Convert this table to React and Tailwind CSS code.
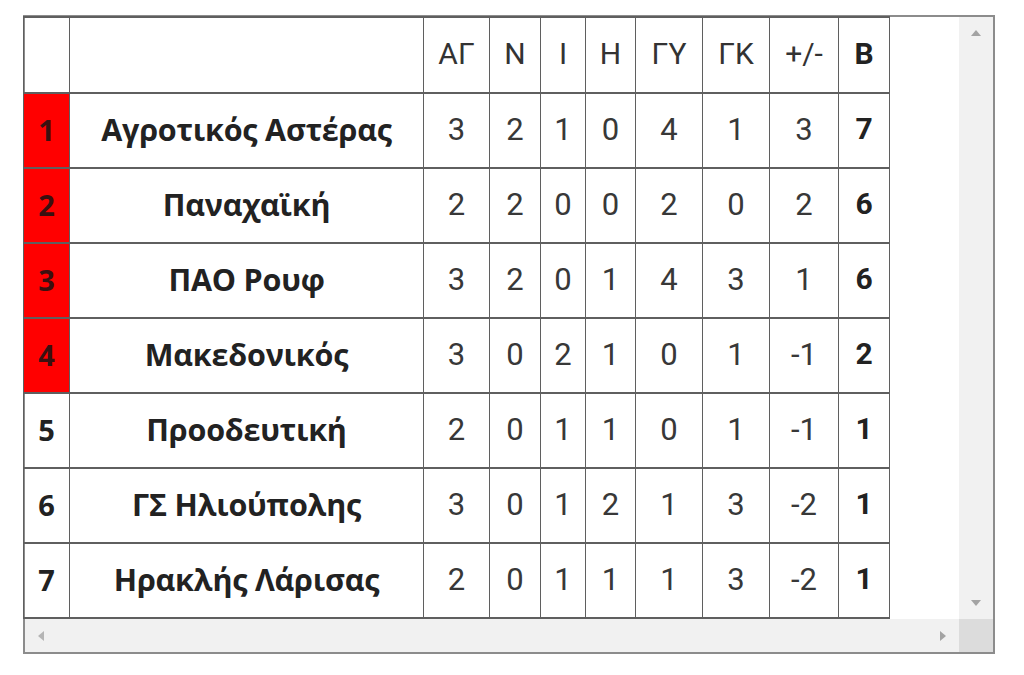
import React from "react";

const rows = [
  { pos: 1, name: "Αγροτικός Αστέρας", v: [3, 2, 1, 0, 4, 1, 3], b: 7, red: true },
  { pos: 2, name: "Παναχαϊκή", v: [2, 2, 0, 0, 2, 0, 2], b: 6, red: true },
  { pos: 3, name: "ΠΑΟ Ρουφ", v: [3, 2, 0, 1, 4, 3, 1], b: 6, red: true },
  { pos: 4, name: "Μακεδονικός", v: [3, 0, 2, 1, 0, 1, -1], b: 2, red: true },
  { pos: 5, name: "Προοδευτική", v: [2, 0, 1, 1, 0, 1, -1], b: 1, red: false },
  { pos: 6, name: "ΓΣ Ηλιούπολης", v: [3, 0, 1, 2, 1, 3, -2], b: 1, red: false },
  { pos: 7, name: "Ηρακλής Λάρισας", v: [2, 0, 1, 1, 1, 3, -2], b: 1, red: false },
];

const heads = ["ΑΓ", "Ν", "Ι", "Η", "ΓΥ", "ΓΚ", "+/-"];
const widths = ["w-[66px]", "w-[51px]", "w-[45px]", "w-[50px]", "w-[67px]", "w-[67px]", "w-[69px]"];

const cell = "border-x border-y-2 border-[#5f5f5f] text-center align-middle p-0 leading-none";

export default function App() {
  return (
    <div className="w-[1024px] h-[675px] bg-white pt-[15px] pl-[23px]">
      <div className="w-[972px] h-[639px] border-2 border-[#8c8c8c] flex flex-col">
        <div className="flex h-[602px]">
          <div className="w-[865px]">
            <table className="border-collapse table-fixed w-[866px] -mt-[1px] -ml-[2px] text-[#222]">
              <colgroup>
                <col className="w-[46px]" />
                <col className="w-[354px]" />
                {widths.map((w, i) => (
                  <col key={i} className={w} />
                ))}
                <col className="w-[51px]" />
              </colgroup>
              <thead>
                <tr className="h-[76px]">
                  <th className={cell}></th>
                  <th className={cell}></th>
                  {heads.map((h) => (
                    <th key={h} className={`${cell} font-normal text-[30px] font-['Roboto',sans-serif] text-[#333] pb-[2px]`}>
                      {h}
                    </th>
                  ))}
                  <th className={`${cell} font-bold text-[30px] font-['Roboto',sans-serif] pb-[2px]`}>B</th>
                </tr>
              </thead>
              <tbody>
                {rows.map((r) => (
                  <tr key={r.pos} className="h-[75px]">
                    <td
                      className={`${cell} font-bold text-[29px] font-['Open_Sans',sans-serif] pb-[3px] ${
                        r.red ? "bg-[#ff0000] text-[#3a1010]" : ""
                      }`}
                    >
                      {r.pos}
                    </td>
                    <td className={`${cell} font-bold text-[30.5px] font-['Open_Sans',sans-serif] tracking-[-0.2px] pb-[3px]`}>
                      {r.name}
                    </td>
                    {r.v.map((x, i) => (
                      <td key={i} className={`${cell} font-normal text-[31px] font-['Roboto',sans-serif] text-[#383838] pb-[3px]`}>
                        {x}
                      </td>
                    ))}
                    <td className={`${cell} font-bold text-[30px] font-['Roboto',sans-serif] pb-[3px]`}>{r.b}</td>
                  </tr>
                ))}
              </tbody>
            </table>
          </div>
          <div className="flex-1"></div>
          <div className="w-[34px] bg-[#f1f1f1] flex flex-col items-center justify-between py-[12px]">
            <svg width="12" height="8" viewBox="0 0 12 8">
              <polygon points="6,1 11,7 1,7" fill="#a3a3a3" />
            </svg>
            <svg width="12" height="8" viewBox="0 0 12 8">
              <polygon points="1,1 11,1 6,7" fill="#a3a3a3" />
            </svg>
          </div>
        </div>
        <div className="flex flex-1">
          <div className="flex-1 bg-[#f1f1f1] flex items-center justify-between px-[12px]">
            <svg width="8" height="12" viewBox="0 0 8 12">
              <polygon points="1,6 7,1 7,11" fill="#b5b5b5" />
            </svg>
            <svg width="8" height="12" viewBox="0 0 8 12">
              <polygon points="1,1 7,6 1,11" fill="#a3a3a3" />
            </svg>
          </div>
          <div className="w-[34px] bg-[#dcdcdc]"></div>
        </div>
      </div>
    </div>
  );
}
